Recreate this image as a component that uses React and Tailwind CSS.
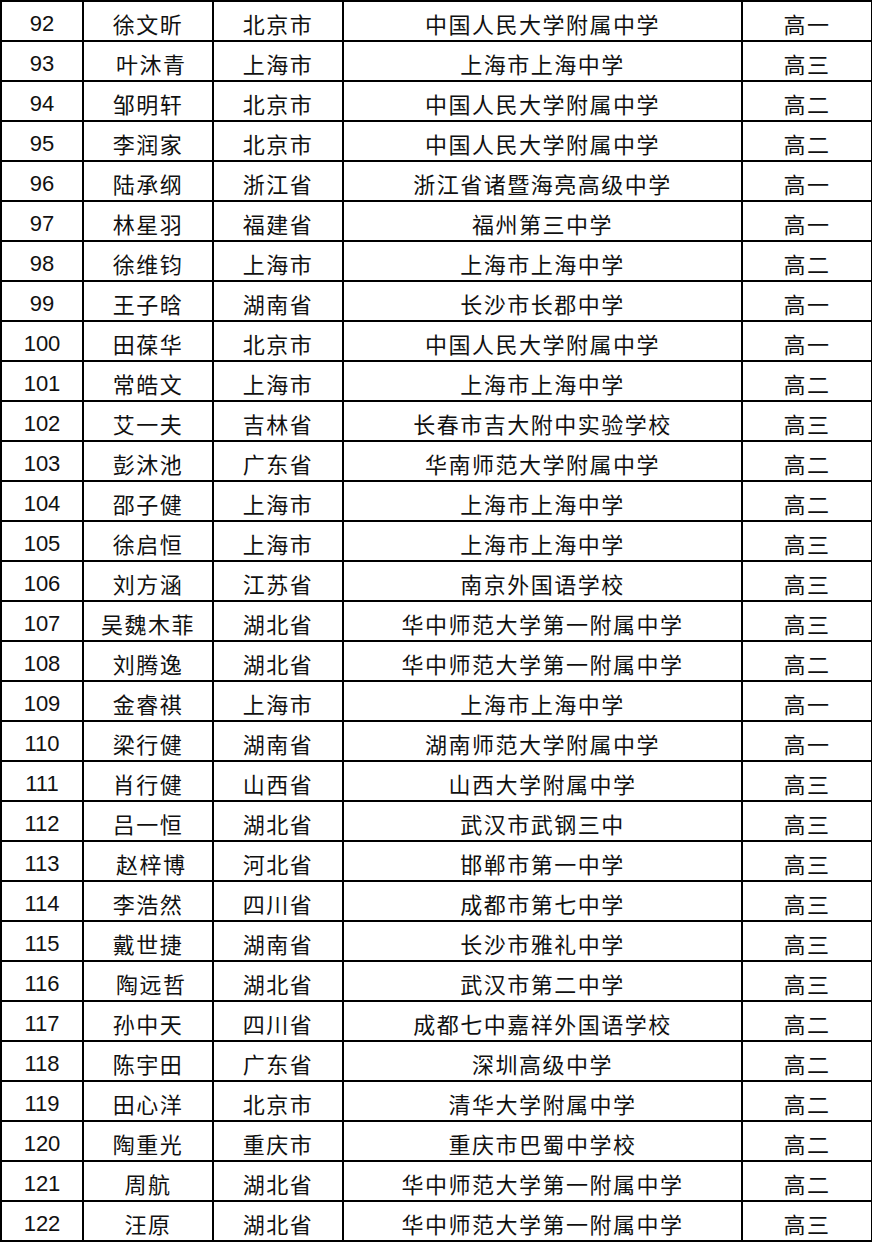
import React from "react";

const rows = [
  ["92", "徐文昕", "北京市", "中国人民大学附属中学", "高一"],
  ["93", " 叶沐青", "上海市", "上海市上海中学", "高三"],
  ["94", "邹明轩", "北京市", "中国人民大学附属中学", "高二"],
  ["95", "李润家", "北京市", "中国人民大学附属中学", "高二"],
  ["96", "陆承纲", "浙江省", "浙江省诸暨海亮高级中学", "高一"],
  ["97", "林星羽", "福建省", "福州第三中学", "高一"],
  ["98", "徐维钧", "上海市", "上海市上海中学", "高二"],
  ["99", "王子晗", "湖南省", "长沙市长郡中学", "高一"],
  ["100", "田葆华", "北京市", "中国人民大学附属中学", "高一"],
  ["101", "常皓文", "上海市", "上海市上海中学", "高二"],
  ["102", "艾一夫", "吉林省", "长春市吉大附中实验学校", "高三"],
  ["103", "彭沐池", "广东省", "华南师范大学附属中学", "高二"],
  ["104", "邵子健", "上海市", "上海市上海中学", "高二"],
  ["105", "徐启恒", "上海市", "上海市上海中学", "高三"],
  ["106", "刘方涵", "江苏省", "南京外国语学校", "高三"],
  ["107", "吴魏木菲", "湖北省", "华中师范大学第一附属中学", "高三"],
  ["108", "刘腾逸", "湖北省", "华中师范大学第一附属中学", "高二"],
  ["109", "金睿祺", "上海市", "上海市上海中学", "高一"],
  ["110", "梁行健", "湖南省", "湖南师范大学附属中学", "高一"],
  ["111", "肖行健", "山西省", "山西大学附属中学", "高三"],
  ["112", "吕一恒", "湖北省", "武汉市武钢三中", "高三"],
  ["113", " 赵梓博", "河北省", "邯郸市第一中学", "高三"],
  ["114", "李浩然", "四川省", "成都市第七中学", "高三"],
  ["115", "戴世捷", "湖南省", "长沙市雅礼中学", "高三"],
  ["116", " 陶远哲", "湖北省", "武汉市第二中学", "高三"],
  ["117", "孙中天", "四川省", "成都七中嘉祥外国语学校", "高二"],
  ["118", "陈宇田", "广东省", "深圳高级中学", "高二"],
  ["119", "田心洋", "北京市", "清华大学附属中学", "高二"],
  ["120", "陶重光", "重庆市", "重庆市巴蜀中学校", "高二"],
  ["121", "周航", "湖北省", "华中师范大学第一附属中学", "高二"],
  ["122", "汪原", "湖北省", "华中师范大学第一附属中学", "高三"],
];

const cell = "border-2 border-black p-0 text-center align-middle leading-[24px]";
const cjk = "pt-[3px] font-['Noto_Sans_CJK_SC',sans-serif] text-[22px] tracking-[1.5px]";

export default function App() {
  return (
    <div className="w-[872px] bg-white text-[#111]">
      <table className="table-fixed border-collapse w-[871px]">
        <colgroup>
          <col className="w-[82px]" />
          <col className="w-[130px]" />
          <col className="w-[130px]" />
          <col className="w-[399px]" />
          <col className="w-[130px]" />
        </colgroup>
        <tbody>
          {rows.map((r) => (
            <tr key={r[0]} className="h-[40px]">
              <td className={`${cell} pt-[5px] font-['Liberation_Sans',sans-serif] text-[22px]`}>
                {r[0]}
              </td>
              <td className={`${cell} whitespace-pre ${cjk}`}>{r[1]}</td>
              <td className={`${cell} ${cjk}`}>{r[2]}</td>
              <td className={`${cell} ${cjk}`}>{r[3]}</td>
              <td className={`${cell} ${cjk}`}>{r[4]}</td>
            </tr>
          ))}
        </tbody>
      </table>
    </div>
  );
}
